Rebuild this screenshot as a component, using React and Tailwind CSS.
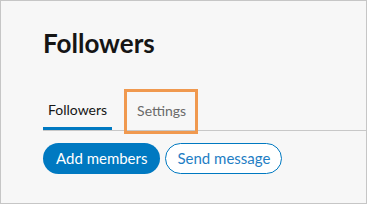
import React from 'react';

function App() {
    const tabClass = "px-[5px] pb-[6px] leading-[20px] text-[14px] border-b-[3px]";

    return (
        <div className="w-[367px] h-[204px] border border-[#c6c6c6] bg-[#f7f7f7] pt-[26px] pl-[42px] font-['Lato','Liberation_Sans',sans-serif]">
            {/* Page title */}
            <h1 className="text-[26px] leading-[32px] font-bold text-[#151515]">Followers</h1>

            {/* Tabs */}
            <div className="mt-[39px] flex gap-[20px] border-b border-[#c8c8c8]">
                <button className={`${tabClass} border-[#0079c1] text-[#151515]`}>Followers</button>
                <div className="relative">
                    <button className={`${tabClass} border-transparent text-[#6a6a6a]`}>Settings</button>
                    {/* highlight box */}
                    <div className="absolute left-[-8px] right-[-7px] top-[-9px] bottom-[-4px] border-[3px] border-[#f0994f]"></div>
                </div>
            </div>

            {/* Actions */}
            <div className="mt-[12px] flex gap-[5px]">
                <button className="h-[31px] px-[13px] rounded-full bg-[#0079c1] text-white text-[15px]">Add members</button>
                <button className="h-[31px] px-[11px] rounded-full bg-white border border-[#0079c1] text-[#1f7ec4] text-[15px]">Send message</button>
            </div>
        </div>
    );
}

export default App;
